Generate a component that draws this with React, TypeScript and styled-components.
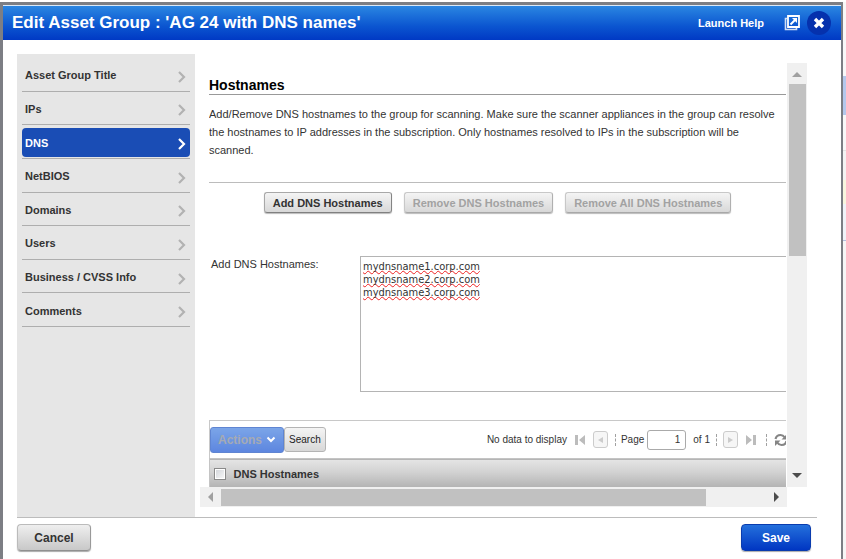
import React, { useState } from "react";
import styled, { createGlobalStyle, css } from "styled-components";

const GlobalStyle = createGlobalStyle`
  *, *::before, *::after { box-sizing: border-box; }
  body {
    margin: 0;
    background: #fff;
    color: #333;
    font: 11px/18px "Liberation Sans", Arial, sans-serif;
  }
  button, input, textarea { font: inherit; color: inherit; margin: 0; }
`;

const Page = styled.div`
  display: grid;
  grid-template-columns: minmax(0, 1fr) 3px;
  min-height: 100vh;
  padding-top: 2px;
`;

const Backdrop = styled.div`
  background: linear-gradient(
    to bottom,
    #f8f8f8 0 74px,
    #b4c8ec 74px 113px,
    #f8f8f8 113px 148px,
    #e4e4e4 148px 149px,
    #f3f3f3 149px 178px,
    #f8f6de 178px 202px,
    #f0f3f8 202px 238px,
    #b4c0e0 238px 239px,
    #f6f6f6 239px
  );
`;

const Dialog = styled.section`
  display: flex;
  flex-direction: column;
  border: solid #7c7e84;
  border-width: 3px 2px 0 3px;
  background: #fff;
`;

const TitleBar = styled.header`
  display: flex;
  align-items: center;
  height: 35px;
  padding: 0 10px 0 9px;
  border-top: 1px solid #dbe9f8;
  background: linear-gradient(#2a86e2, #0b55d0 60%, #0039c4);
  color: #fff;
`;

const Title = styled.h1`
  flex: 1;
  margin: 0;
  font-size: 17px;
  line-height: 20px;
  white-space: nowrap;
`;

const HelpLink = styled.a`
  margin-right: 20px;
  color: #fff;
  font-weight: bold;
  text-decoration: none;
  white-space: nowrap;
`;

const IconButton = styled.button`
  display: flex;
  padding: 0;
  border: 0;
  background: none;
  color: #fff;
  & + & { margin-left: 7px; }
`;

const Body = styled.div`
  display: flex;
  flex: 1;
  margin: 14px 24px 0 14px;
  border-bottom: 1px solid #bcbcbc;
`;

const Sidebar = styled.nav`
  flex: 0 0 178px;
  padding: 4px 5px 0;
  background: #e6e6e6;
`;

const NavList = styled.ul`
  display: grid;
  grid-auto-rows: 1fr;
  height: 269px;
  margin: 0;
  padding: 0;
  list-style: none;
`;

const NavItem = styled.li`
  display: flex;
  padding: 3px 0 1px;
  border-bottom: 1px solid #aeaeae;
`;

const NavButton = styled.button<{ $active: boolean }>`
  display: flex;
  flex: 1;
  align-items: center;
  justify-content: space-between;
  padding: 0 4px 0 3px;
  border: 0;
  border-radius: 4px;
  background: ${(p) => (p.$active ? "#1a4db5" : "transparent")};
  color: ${(p) => (p.$active ? "#fff" : "#333")};
  font-weight: bold;
  text-align: left;
  svg {
    margin-top: 3px;
    color: ${(p) => (p.$active ? "#fff" : "#b2b2b2")};
  }
`;

const ScrollPane = styled.div`
  display: grid;
  flex: 1;
  grid-template-columns: minmax(0, 1fr) 20px;
  grid-template-rows: 1fr 20px;
  margin: 9px 10px 10px 5px;
`;

const Content = styled.main`
  margin: 0 1px 0 9px;
  overflow: hidden;
`;

const Heading = styled.h2`
  margin: 14px 0 0;
  border-bottom: 1px solid #999;
  color: #000;
  font-size: 14px;
  line-height: 17px;
`;

const Description = styled.p`
  margin: 0;
  padding: 10px 0 23px;
  border-bottom: 1px solid #bcbcbc;
  white-space: nowrap;
`;

const ButtonRow = styled.div`
  display: flex;
  justify-content: center;
  gap: 12px;
  padding: 9px 0 43px;
`;

const face = css`
  border: 1px solid #b4b4b4;
  border-radius: 3px;
  background: linear-gradient(#f4f4f4, #d8d8d8);
`;

const GrayButton = styled.button`
  ${face}
  height: 21px;
  padding: 0 8px;
  border-color: #a8a8a8 #848484 #808080 #a8a8a8;
  box-shadow: 0 1px 1px #bbb;
  font-weight: bold;
  line-height: 18px;
  white-space: nowrap;
  &:disabled {
    border-color: #c8c8c8 #b0b0b0 #a8a8a8 #c8c8c8;
    color: #a2a2a2;
  }
`;

const Field = styled.div`
  display: grid;
  grid-template-columns: 149px minmax(0, 1fr);
  margin: 0 -6px 28px 2px;
  line-height: 16px;
`;

const NamesBox = styled.textarea`
  display: block;
  width: 100%;
  height: 136px;
  padding: 3px 2px;
  border: 1px solid #b4b4b4;
  border-radius: 0;
  outline: 0;
  resize: none;
  font: 11px/13px "DejaVu Sans Condensed", "DejaVu Sans", sans-serif;
  text-decoration: underline wavy #e22 1px;
  text-decoration-skip-ink: none;
  text-underline-offset: 0;
`;

const Toolbar = styled.div`
  display: flex;
  align-items: center;
  height: 38px;
  margin-right: -2px;
  border: solid #c8c8c8;
  border-width: 1px 0 0 1px;
  font-size: 10px;
  white-space: nowrap;
`;

const ActionsButton = styled.button`
  display: flex;
  align-items: center;
  gap: 4px;
  height: 26px;
  padding: 0 7px;
  border: 1px solid #5f85d2;
  border-radius: 3px;
  background: linear-gradient(#7ba5e8, #5d86df);
  font-size: 12px;
  font-weight: bold;
  &:disabled { color: #a5aab4; }
  svg { color: #fff; }
`;

const SearchButton = styled.button`
  ${face}
  height: 25px;
  margin-right: auto;
  padding: 0 4px;
  color: #222;
`;

const Pager = styled.div`
  display: flex;
  align-items: center;
  color: #333;
`;

const Separator = styled.span`
  height: 12px;
  border-left: 1px dashed #a0a0a0;
`;

const PageInput = styled.input`
  width: 39px;
  height: 20px;
  margin: 0 7px 0 3px;
  padding: 0 5px;
  border: 1px solid #aaa;
  border-radius: 3px;
  text-align: right;
`;

const StepBox = styled.button`
  ${face}
  display: flex;
  align-items: center;
  justify-content: center;
  width: 15px;
  height: 17px;
  padding: 0;
  border-color: #ccc;
  background: #f6f6f6;
`;

const PagerGap = styled.span<{ $w: number }>`
  width: ${(p) => p.$w}px;
`;

const Table = styled.table`
  width: 100%;
  border-collapse: collapse;
`;

const HeadRow = styled.tr`
  height: 28px;
  border: solid #c4c4c4;
  border-width: 1px 0 0 1px;
  background: linear-gradient(#e4e4e4, #d2d2d2 45%, #b4b4b4);
`;

const HeadCell = styled.th`
  padding: 2px 5px 0;
  text-align: left;
`;

const CheckCell = styled.td`
  width: 19px;
  padding: 2px 0 0 4px;
`;

const Checkbox = styled.input`
  display: block;
  width: 12px;
  height: 12px;
  appearance: none;
  border: 1px solid #8a8a8a;
  background: linear-gradient(135deg, #d0d3d8, #fafafa);
  box-shadow: inset 0 0 0 1px #fff;
`;

const VTrack = styled.div`
  display: flex;
  flex-direction: column;
  align-items: center;
  padding: 9px 0;
  background: #f0f0f0;
`;

const VThumb = styled.div`
  width: 17px;
  height: 172px;
  margin: 7px 0 auto;
  background: #c1c1c1;
`;

const HTrack = styled.div`
  display: flex;
  align-items: center;
  padding: 0 8px;
  background: #f0f0f0;
`;

const HThumb = styled.div`
  width: 85%;
  height: 17px;
  margin: 0 auto 0 8px;
  background: #c1c1c1;
`;

const Footer = styled.footer`
  display: flex;
  justify-content: space-between;
  margin: 0 30px 8px 14px;
  padding-top: 6px;
`;

const FooterButton = styled.button<{ $primary?: boolean }>`
  ${face}
  min-width: ${(p) => (p.$primary ? "70px" : "74px")};
  height: 27px;
  border-color: #bbb #999 #909090 #bbb;
  border-radius: 4px;
  background: linear-gradient(#efefef, #c8c8c8);
  box-shadow: 0 1px 1px #aaa;
  font-size: 12px;
  font-weight: bold;
  ${(p) =>
    p.$primary &&
    css`
      border-color: #0a3cae;
      background: linear-gradient(#2470dc, #0036c2);
      color: #fff;
    `}
`;

const sections = [
  "Asset Group Title",
  "IPs",
  "DNS",
  "NetBIOS",
  "Domains",
  "Users",
  "Business / CVSS Info",
  "Comments",
];

const Chevron = () => (
  <svg width="8" height="12" viewBox="0 0 8 12" fill="none" stroke="currentColor" strokeWidth="2.2">
    <path d="M1 1l5 5-5 5" />
  </svg>
);

const Triangle = ({ d, color, w, h }: { d: string; color: string; w: number; h: number }) => (
  <svg width={w} height={h} viewBox={`0 0 ${w} ${h}`} fill={color}>
    <path d={d} />
  </svg>
);

const PopOutIcon = () => (
  <svg width="16" height="16" viewBox="0 0 16 16" fill="none" stroke="currentColor">
    <path d="M3 3.500H1.500v11h11V13" strokeWidth="1.600" opacity=".8" />
    <path d="M4 1h11v11H4z" strokeWidth="1.800" />
    <path d="M6.500 9.500l5-5" strokeWidth="2" />
    <path d="M8 3h5v5z" fill="currentColor" stroke="none" />
  </svg>
);

const CloseIcon = () => (
  <svg width="24" height="24" viewBox="0 0 24 24">
    <circle cx="12" cy="12" r="12" fill="#0531ad" />
    <path d="M8 8l8 8M16 8l-8 8" stroke="#fff" strokeWidth="3.400" />
  </svg>
);

const EdgeIcon = ({ last }: { last?: boolean }) => (
  <svg width="11" height="12" viewBox="0 0 11 12" fill="#bcbcbc">
    {last ? <path d="M0 1l6 5-6 5zM7 1h3v10H7z" /> : <path d="M11 1L5 6l6 5zM1 1h3v10H1z" />}
  </svg>
);

const RefreshIcon = () => (
  <svg width="14" height="14" viewBox="0 0 14 14" fill="none" stroke="#858585" strokeWidth="2.200">
    <path d="M1.500 6C2.200 3.200 4 2 6.500 2c1.800 0 3.100.7 4 2.200" />
    <path d="M13 1v5.500H7.500z" fill="#858585" stroke="none" />
    <path d="M12.500 8c-.7 2.800-2.500 4-5 4-1.800 0-3.100-.7-4-2.200" />
    <path d="M1 13V7.500h5.500z" fill="#858585" stroke="none" />
  </svg>
);

export default function App() {
  const [active, setActive] = useState("DNS");
  const [names, setNames] = useState("mydnsname1.corp.com\nmydnsname2.corp.com\nmydnsname3.corp.com");
  const [page, setPage] = useState("1");

  return (
    <Page>
      <GlobalStyle />
      <Dialog aria-labelledby="title">
        <TitleBar>
          <Title id="title">Edit Asset Group : 'AG 24 with DNS names'</Title>
          <HelpLink href="#help">Launch Help</HelpLink>
          <IconButton aria-label="Open in new window"><PopOutIcon /></IconButton>
          <IconButton aria-label="Close"><CloseIcon /></IconButton>
        </TitleBar>

        <Body>
          <Sidebar>
            <NavList>
              {sections.map((name) => (
                <NavItem key={name}>
                  <NavButton $active={name === active} onClick={() => setActive(name)}>
                    {name}
                    <Chevron />
                  </NavButton>
                </NavItem>
              ))}
            </NavList>
          </Sidebar>

          <ScrollPane>
            <Content>
              <Heading>Hostnames</Heading>
              <Description>
                Add/Remove DNS hostnames to the group for scanning. Make sure the scanner appliances in the group can resolve
                <br />
                the hostnames to IP addresses in the subscription. Only hostnames resolved to IPs in the subscription will be
                <br />
                scanned.
              </Description>
              <ButtonRow>
                <GrayButton>Add DNS Hostnames</GrayButton>
                <GrayButton disabled>Remove DNS Hostnames</GrayButton>
                <GrayButton disabled>Remove All DNS Hostnames</GrayButton>
              </ButtonRow>
              <Field>
                <label htmlFor="names">Add DNS Hostnames:</label>
                <NamesBox id="names" spellCheck={false} value={names} onChange={(e) => setNames(e.target.value)} />
              </Field>
              <Toolbar>
                <ActionsButton disabled>
                  Actions
                  <svg width="10" height="7" viewBox="0 0 10 7" fill="none" stroke="currentColor" strokeWidth="2">
                    <path d="M1.500 1.500L5 5l3.500-3.500" />
                  </svg>
                </ActionsButton>
                <SearchButton>Search</SearchButton>
                <Pager>
                  <span>No data to display</span>
                  <PagerGap $w={7} />
                  <IconButton disabled aria-label="First page"><EdgeIcon /></IconButton>
                  <PagerGap $w={8} />
                  <StepBox disabled aria-label="Previous page">
                    <Triangle w={5} h={6} d="M5 0v6L0 3z" color="#ccc" />
                  </StepBox>
                  <PagerGap $w={7} />
                  <Separator />
                  <PagerGap $w={5} />
                  <label htmlFor="page">Page</label>
                  <PageInput id="page" value={page} onChange={(e) => setPage(e.target.value)} />
                  <span>of 1</span>
                  <PagerGap $w={6} />
                  <Separator />
                  <PagerGap $w={6} />
                  <StepBox disabled aria-label="Next page">
                    <Triangle w={5} h={6} d="M0 0v6l5-3z" color="#ccc" />
                  </StepBox>
                  <PagerGap $w={8} />
                  <IconButton disabled aria-label="Last page"><EdgeIcon last /></IconButton>
                  <PagerGap $w={9} />
                  <Separator />
                  <PagerGap $w={7} />
                  <IconButton aria-label="Refresh"><RefreshIcon /></IconButton>
                </Pager>
              </Toolbar>
              <Table>
                <thead>
                  <HeadRow>
                    <CheckCell><Checkbox type="checkbox" aria-label="Select all" /></CheckCell>
                    <HeadCell scope="col">DNS Hostnames</HeadCell>
                  </HeadRow>
                </thead>
              </Table>
            </Content>
            <VTrack>
              <Triangle w={10} h={5} d="M0 5L5 0l5 5z" color="#a0a0a0" />
              <VThumb />
              <Triangle w={10} h={5} d="M0 0l5 5 5-5z" color="#4c4c4c" />
            </VTrack>
            <HTrack>
              <Triangle w={5} h={10} d="M5 0v10L0 5z" color="#a0a0a0" />
              <HThumb />
              <Triangle w={5} h={10} d="M0 0v10l5-5z" color="#4c4c4c" />
            </HTrack>
          </ScrollPane>
        </Body>

        <Footer>
          <FooterButton>Cancel</FooterButton>
          <FooterButton $primary>Save</FooterButton>
        </Footer>
      </Dialog>
      <Backdrop />
    </Page>
  );
}
